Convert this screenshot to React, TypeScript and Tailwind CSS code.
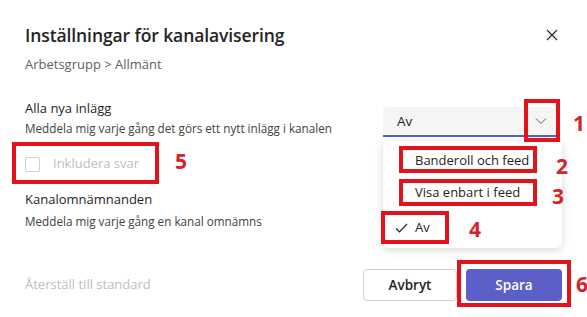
import React from "react";

const menuItems = ["Banderoll och feed", "Visa enbart i feed", "Av"];

// röda markeringar ovanpå skärmbilden
function Mark({ className }: { className: string }) {
  return <div className={`absolute z-20 border-[4px] border-[#e1141c] pointer-events-none ${className}`} />;
}

function Num({ n, className }: { n: string; className: string }) {
  return <div className={`absolute z-20 text-[21px] font-bold leading-none text-[#d5232b] ${className}`}>{n}</div>;
}

export default function App() {
  return (
    <div
      className="relative w-[587px] h-[317px] bg-white overflow-hidden text-[#242424]"
      style={{ fontFamily: '"Segoe UI", "Open Sans", sans-serif' }}
    >
      <div className="flex flex-col px-[25px] pt-[22px]">
        {/* rubrik */}
        <div className="flex items-center justify-between">
          <h1 className="text-[17.5px] font-semibold leading-[26px] tracking-[-0.1px]">Inställningar för kanalavisering</h1>
          <svg width="12" height="12" viewBox="0 0 12 12" className="mr-[4px]">
            <path d="M1 1 L11 11 M11 1 L1 11" stroke="#242424" strokeWidth="1.1" />
          </svg>
        </div>
        <div className="mt-[7px] text-[13px] leading-[18px] text-[#616161]">Arbetsgrupp &gt; Allmänt</div>

        {/* alla nya inlägg */}
        <div className="mt-[25px] flex items-start justify-between">
          <div>
            <div className="text-[13px] leading-[20px]">Alla nya inlägg</div>
            <div className="text-[11.7px] leading-[16px] text-[#424242] mt-[2px]">Meddela mig varje gång det görs ett nytt inlägg i kanalen</div>
          </div>
          <div className="relative mr-[5px] mt-[9px] w-[174px]">
            <div className="flex h-[30px] items-center justify-between rounded-t-[4px] bg-[#f5f5f5] border-b-[2px] border-[#5b5fc7] pl-[14px] pr-[10px]">
              <span className="text-[13.5px]">Av</span>
              <svg width="12" height="8" viewBox="0 0 12 8">
                <path d="M1 1.5 L6 6.5 L11 1.5" fill="none" stroke="#616161" strokeWidth="1" />
              </svg>
            </div>
            {/* öppen meny */}
            <div className="absolute left-0 top-[34px] w-[179px] rounded-[6px] bg-white py-[4px] shadow-[0_2px_10px_rgba(0,0,0,0.16)] z-10">
              {menuItems.map((item) => (
                <div
                  key={item}
                  className={`flex items-center pl-[12px] text-[13px] ${item === "Av" ? "h-[35px] pt-[3px]" : "h-[32px]"}`}
                >
                  <span className="w-[20px] flex">
                    {item === "Av" && (
                      <svg width="13" height="10" viewBox="0 0 13 10">
                        <path d="M1 5.5 L4.5 9 L12 1" fill="none" stroke="#242424" strokeWidth="1.2" />
                      </svg>
                    )}
                  </span>
                  <span>{item}</span>
                </div>
              ))}
            </div>
          </div>
        </div>

        {/* inkludera svar */}
        <div className="mt-[14px] flex items-center gap-[13px] h-[26px]">
          <span className="h-[15px] w-[15px] rounded-[2px] border border-[#d1d1d1]" />
          <span className="text-[13px] text-[#bdbdbd]">Inkludera svar</span>
        </div>

        {/* kanalomnämnanden */}
        <div className="mt-[12px] text-[13px] leading-[20px]">Kanalomnämnanden</div>
        <div className="text-[11.7px] leading-[16px] text-[#424242] mt-[4px]">Meddela mig varje gång en kanal omnämns</div>

        {/* knappar */}
        <div className="mt-[40px] flex items-center justify-between">
          <span className="text-[13px] text-[#bdbdbd]">Återställ till standard</span>
          <div className="flex gap-[9px]">
            <button className="h-[32px] w-[94px] rounded-[4px] border border-[#d1d1d1] bg-white text-[13.5px] font-semibold">Avbryt</button>
            <button className="h-[32px] w-[96px] rounded-[4px] bg-[#5b5fc7] text-[13.5px] font-semibold text-white">Spara</button>
          </div>
        </div>
      </div>

      {/* markeringar */}
      <Mark className="left-[524px] top-[99px] w-[36px] h-[43px]" />
      <Num n="1" className="left-[573px] top-[113px]" />
      <Mark className="left-[399px] top-[146px] w-[138px] h-[27px]" />
      <Num n="2" className="left-[556px] top-[156px]" />
      <Mark className="left-[399px] top-[179px] w-[138px] h-[27px]" />
      <Num n="3" className="left-[552px] top-[186px]" />
      <Mark className="left-[381px] top-[211px] w-[68px] h-[33px]" />
      <Num n="4" className="left-[469px] top-[219px]" />
      <Mark className="left-[12px] top-[142px] w-[147px] h-[42px]" />
      <Num n="5" className="left-[175px] top-[151px]" />
      <Mark className="left-[457px] top-[260px] w-[114px] h-[47px]" />
      <Num n="6" className="left-[576px] top-[274px]" />
    </div>
  );
}
